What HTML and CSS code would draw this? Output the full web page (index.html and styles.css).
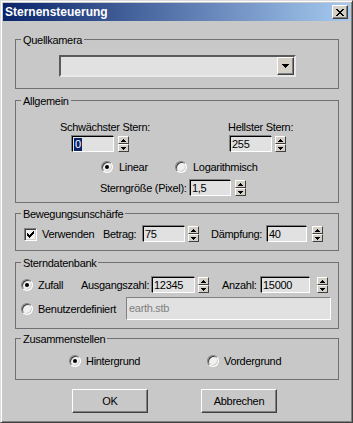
FILE: index.html
```
<!DOCTYPE html>
<html>
<head>
<meta charset="utf-8">
<link rel="stylesheet" href="styles.css">
</head>
<body>
<div class="window">
  <div class="titlebar">
    <span class="title">Sternensteuerung</span>
    <span class="close"><svg width="8" height="7" viewBox="0 0 8 7"><path d="M0 0h2v1h-2z M6 0h2v1h-2z M1 1h2v1h-2z M5 1h2v1h-2z M2 2h4v1h-4z M3 3h2v1h-2z M2 4h4v1h-4z M1 5h2v1h-2z M5 5h2v1h-2z M0 6h2v1h-2z M6 6h2v1h-2z" fill="#000"/></svg></span>
  </div>
  <div class="content">
    <div class="group g-quell">
      <div class="gtitle">Quellkamera</div>
      <div class="dropdown">
        <div class="dd-btn"><svg width="7" height="4" viewBox="0 0 7 4"><path d="M0 0h7v1h-7z M1 1h5v1h-5z M2 2h3v1h-3z M3 3h1v1h-1z" fill="#000"/></svg></div>
      </div>
    </div>

    <div class="group g-allg">
      <div class="gtitle">Allgemein</div>
      <div class="allg-top">
        <div class="col col1">
          <div class="lbl">Schwächster Stern:</div>
          <div class="spinrow sr1">
            <div class="field w42"><span class="sel">0</span></div>
            <div class="spin ml4"><div class="sp-up"><svg width="5" height="3" viewBox="0 0 5 3"><path d="M2 0h1v1h-1z M1 1h3v1h-3z M0 2h5v1h-5z" fill="#000"/></svg></div><div class="sp-dn"><svg width="5" height="3" viewBox="0 0 5 3"><path d="M0 0h5v1h-5z M1 1h3v1h-3z M2 2h1v1h-1z" fill="#000"/></svg></div></div>
          </div>
        </div>
        <div class="col">
          <div class="lbl">Hellster Stern:</div>
          <div class="spinrow sr2">
            <div class="field w42">255</div>
            <div class="spin ml3"><div class="sp-up"><svg width="5" height="3" viewBox="0 0 5 3"><path d="M2 0h1v1h-1z M1 1h3v1h-3z M0 2h5v1h-5z" fill="#000"/></svg></div><div class="sp-dn"><svg width="5" height="3" viewBox="0 0 5 3"><path d="M0 0h5v1h-5z M1 1h3v1h-3z M2 2h1v1h-1z" fill="#000"/></svg></div></div>
          </div>
        </div>
      </div>
      <div class="row radio-row r-allg">
        <span class="radio checked ml85"></span>
        <span class="rtext t-linear">Linear</span>
        <span class="radio"></span>
        <span class="rtext">Logarithmisch</span>
      </div>
      <div class="row field-row r-size">
        <span class="txt t-size">Sterngröße (Pixel):</span>
        <div class="field w41">1,5</div>
        <div class="spin ml4"><div class="sp-up"><svg width="5" height="3" viewBox="0 0 5 3"><path d="M2 0h1v1h-1z M1 1h3v1h-3z M0 2h5v1h-5z" fill="#000"/></svg></div><div class="sp-dn"><svg width="5" height="3" viewBox="0 0 5 3"><path d="M0 0h5v1h-5z M1 1h3v1h-3z M2 2h1v1h-1z" fill="#000"/></svg></div></div>
      </div>
    </div>

    <div class="group g-bew">
      <div class="gtitle">Bewegungsunschärfe</div>
      <div class="row field-row r-bew">
        <span class="checkbox"><svg width="7" height="7" viewBox="0 0 7 7"><path d="M6 0h1v1h-1z M5 1h2v1h-2z M0 2h1v1h-1z M4 2h3v1h-3z M0 3h2v1h-2z M3 3h3v1h-3z M0 4h5v1h-5z M1 5h3v1h-3z M2 6h1v1h-1z" fill="#000"/></svg></span>
        <span class="txt t-verw">Verwenden</span>
        <span class="txt t-betrag">Betrag:</span>
        <div class="field w42">75</div>
        <div class="spin ml3"><div class="sp-up"><svg width="5" height="3" viewBox="0 0 5 3"><path d="M2 0h1v1h-1z M1 1h3v1h-3z M0 2h5v1h-5z" fill="#000"/></svg></div><div class="sp-dn"><svg width="5" height="3" viewBox="0 0 5 3"><path d="M0 0h5v1h-5z M1 1h3v1h-3z M2 2h1v1h-1z" fill="#000"/></svg></div></div>
        <span class="txt t-daempf">Dämpfung:</span>
        <div class="field w40">40</div>
        <div class="spin ml5"><div class="sp-up"><svg width="5" height="3" viewBox="0 0 5 3"><path d="M2 0h1v1h-1z M1 1h3v1h-3z M0 2h5v1h-5z" fill="#000"/></svg></div><div class="sp-dn"><svg width="5" height="3" viewBox="0 0 5 3"><path d="M0 0h5v1h-5z M1 1h3v1h-3z M2 2h1v1h-1z" fill="#000"/></svg></div></div>
      </div>
    </div>

    <div class="group g-stern">
      <div class="gtitle">Sterndatenbank</div>
      <div class="row field-row r-stern1">
        <span class="radio checked ml5"></span>
        <span class="rtext t-zufall">Zufall</span>
        <span class="txt t-ausg">Ausgangszahl:</span>
        <div class="field w43">12345</div>
        <div class="spin ml3"><div class="sp-up"><svg width="5" height="3" viewBox="0 0 5 3"><path d="M2 0h1v1h-1z M1 1h3v1h-3z M0 2h5v1h-5z" fill="#000"/></svg></div><div class="sp-dn"><svg width="5" height="3" viewBox="0 0 5 3"><path d="M0 0h5v1h-5z M1 1h3v1h-3z M2 2h1v1h-1z" fill="#000"/></svg></div></div>
        <span class="txt t-anzahl">Anzahl:</span>
        <div class="field w49">15000</div>
        <div class="spin ml7"><div class="sp-up"><svg width="5" height="3" viewBox="0 0 5 3"><path d="M2 0h1v1h-1z M1 1h3v1h-3z M0 2h5v1h-5z" fill="#000"/></svg></div><div class="sp-dn"><svg width="5" height="3" viewBox="0 0 5 3"><path d="M0 0h5v1h-5z M1 1h3v1h-3z M2 2h1v1h-1z" fill="#000"/></svg></div></div>
      </div>
      <div class="row r-stern2">
        <span class="radio ml5"></span>
        <span class="rtext t-benutzer">Benutzerdefiniert</span>
        <div class="field disabled wide">earth.stb</div>
      </div>
    </div>

    <div class="group g-zus">
      <div class="gtitle">Zusammenstellen</div>
      <div class="row radio-row r-zus">
        <span class="radio checked ml53"></span>
        <span class="rtext t-hinter">Hintergrund</span>
        <span class="radio"></span>
        <span class="rtext">Vordergrund</span>
      </div>
    </div>

    <div class="buttons">
      <button class="btn btn-ok">OK</button>
      <button class="btn btn-cancel">Abbrechen</button>
    </div>
  </div>
</div>
</body>
</html>
```

FILE: styles.css
```
* { box-sizing: border-box; }
html, body { margin: 0; padding: 0; }
body {
  font-family: "Liberation Sans", Arial, sans-serif;
  font-size: 11px;
  letter-spacing: -0.3px;
  color: #000;
  background: #c8c8c8;
}
.window {
  width: 353px;
  height: 423px;
  background: #c8c8c8;
  border: 1px solid;
  border-color: #dcdcdc #404040 #404040 #dcdcdc;
  box-shadow: inset 1px 1px #fff, inset -1px -1px #808080;
  padding: 2px;
  display: flex;
  flex-direction: column;
}
.titlebar {
  height: 18px;
  flex: none;
  background: linear-gradient(to right, #0a246a, #a6caf0);
  display: flex;
  align-items: center;
  justify-content: space-between;
  padding: 0 2px 0 2px;
}
.title {
  color: #fff;
  font-weight: bold;
  font-size: 12px;
  letter-spacing: 0;
  line-height: 14px;
}
.close {
  width: 16px;
  height: 14px;
  background: #d4d0c8;
  border: 1px solid;
  border-color: #fff #404040 #404040 #fff;
  box-shadow: inset -1px -1px #808080;
  display: flex;
  align-items: center;
  justify-content: center;
}
.content {
  padding: 18px 11px 0 12px;
  display: flex;
  flex-direction: column;
}
.group {
  border: 1px solid #707070;
  display: flex;
  flex-direction: column;
  flex: none;
}
.gtitle {
  align-self: flex-start;
  margin: -6px 0 0 5px;
  padding: 0 2px;
  background: #c8c8c8;
  line-height: 13px;
  height: 13px;
}
.g-quell { height: 50px; }
.g-allg { height: 103px; margin-top: 11px; }
.g-bew { height: 38px; margin-top: 10px; }
.g-stern { height: 67px; margin-top: 11px; }
.g-zus { height: 42px; margin-top: 9px; }

/* dropdown */
.dropdown {
  margin: 8px 0 0 43px;
  width: 237px;
  height: 22px;
  background: #e1e1e1;
  border: 2px solid;
  border-color: #5a5a5a #e8e8e8 #e8e8e8 #5a5a5a;
  display: flex;
  justify-content: flex-end;
}
.dd-btn {
  width: 17px;
  height: 18px;
  background: #d4d0c8;
  border: 1px solid;
  border-color: #fff #404040 #404040 #fff;
  box-shadow: inset -1px -1px #808080;
  display: flex;
  align-items: center;
  justify-content: center;
}

/* fields */
.field {
  height: 16px;
  background: #e1e1e1;
  border: 1px solid;
  border-color: #000 #fff #fff #000;
  box-shadow: -1px -1px 0 #808080;
  padding-left: 1px;
  line-height: 14px;
  white-space: nowrap;
  overflow: hidden;
  flex: none;
}
.w40 { width: 40px; }
.w41 { width: 41px; }
.w42 { width: 42px; }
.w43 { width: 43px; }
.w49 { width: 49px; }
.sel {
  display: inline-block;
  background: #0a246a;
  color: #fff;
  padding: 0 1px;
  line-height: 13px;
}
.field.disabled {
  color: #808080;
  background: #e1e1e1;
  border-color: #808080 #fff #fff #808080;
  box-shadow: none;
  height: 23px;
  line-height: 20px;
  padding-left: 2px;
}
.wide { width: 205px; }

/* spinner */
.spin {
  width: 11px;
  height: 16px;
  display: flex;
  flex-direction: column;
  flex: none;
}
.sp-up, .sp-dn {
  flex: 1;
  background: #d4d0c8;
  border: 1px solid;
  border-color: #fff #404040 #404040 #fff;
  display: flex;
  align-items: center;
  justify-content: center;
}
.ml3 { margin-left: 3px; }
.ml4 { margin-left: 4px; }
.ml5 { margin-left: 5px; }
.ml7 { margin-left: 7px; }
.ml53 { margin-left: 53px; }
.ml85 { margin-left: 85px; }

/* Allgemein */
.allg-top {
  display: flex;
  margin-top: 13px;
}
.col { display: flex; flex-direction: column; }
.col1 { margin-left: 44px; width: 168px; }
.lbl { line-height: 13px; height: 13px; white-space: nowrap; }
.spinrow { display: flex; margin-top: 2px; }
.sr1 { margin-left: 12px; }
.sr2 { margin-left: 2px; }

.row { display: flex; align-items: center; }
.radio-row { height: 13px; }
.field-row { height: 16px; }
.r-allg { margin-top: 8px; }
.r-size { margin-top: 7px; }
.t-size { margin-left: 84px; width: 90px; }
.txt { white-space: nowrap; flex: none; }
.rtext { white-space: nowrap; flex: none; margin-left: 6px; }
.t-linear { width: 56px; }

/* radio */
.radio {
  width: 12px;
  height: 12px;
  border-radius: 50%;
  flex: none;
  border: 1px solid;
  border-color: #808080 #fff #fff #808080;
  background: #f0f0f0;
  box-shadow: inset 1px 1px #404040, inset -1px -1px #d4d0c8;
  display: flex;
  align-items: center;
  justify-content: center;
}
.radio.checked::after {
  content: "";
  width: 4px;
  height: 4px;
  border-radius: 50%;
  background: #000;
}

/* checkbox */
.checkbox {
  margin-left: 8px;
  width: 13px;
  height: 13px;
  flex: none;
  background: #f0f0f0;
  border: 1px solid;
  border-color: #808080 #fff #fff #808080;
  box-shadow: inset 1px 1px #404040, inset -1px -1px #d4d0c8;
  display: flex;
  align-items: center;
  justify-content: center;
}
.r-bew { margin-top: 5px; }
.t-verw { margin-left: 5px; width: 61px; }
.t-betrag { width: 40px; }
.t-daempf { margin-left: 12px; width: 56px; }

/* Sterndatenbank */
.r-stern1 { margin-top: 7px; }
.t-zufall { width: 43px; margin-left: 5px; }
.t-ausg { width: 71px; }
.t-anzahl { margin-left: 13px; width: 39px; }
.r-stern2 { margin-top: 4px; height: 23px; }
.t-benutzer { width: 88px; margin-left: 5px; }

/* Zusammenstellen */
.r-zus { margin-top: 8px; }
.t-hinter { width: 121px; margin-left: 5px; }
.r-zus .rtext:last-child { margin-left: 5px; }

/* buttons */
.buttons {
  display: flex;
  margin-top: 9px;
  height: 24px;
}
.btn {
  width: 76px;
  height: 24px;
  font-family: "Liberation Sans", Arial, sans-serif;
  font-size: 11px;
  letter-spacing: -0.3px;
  color: #000;
  background: #c8c8c8;
  border: 1px solid;
  border-color: #fff #404040 #404040 #fff;
  box-shadow: inset -1px -1px #808080;
  padding: 0;
  margin: 0;
}
.btn-ok { margin-left: 57px; }
.btn-cancel { margin-left: 53px; }
```
